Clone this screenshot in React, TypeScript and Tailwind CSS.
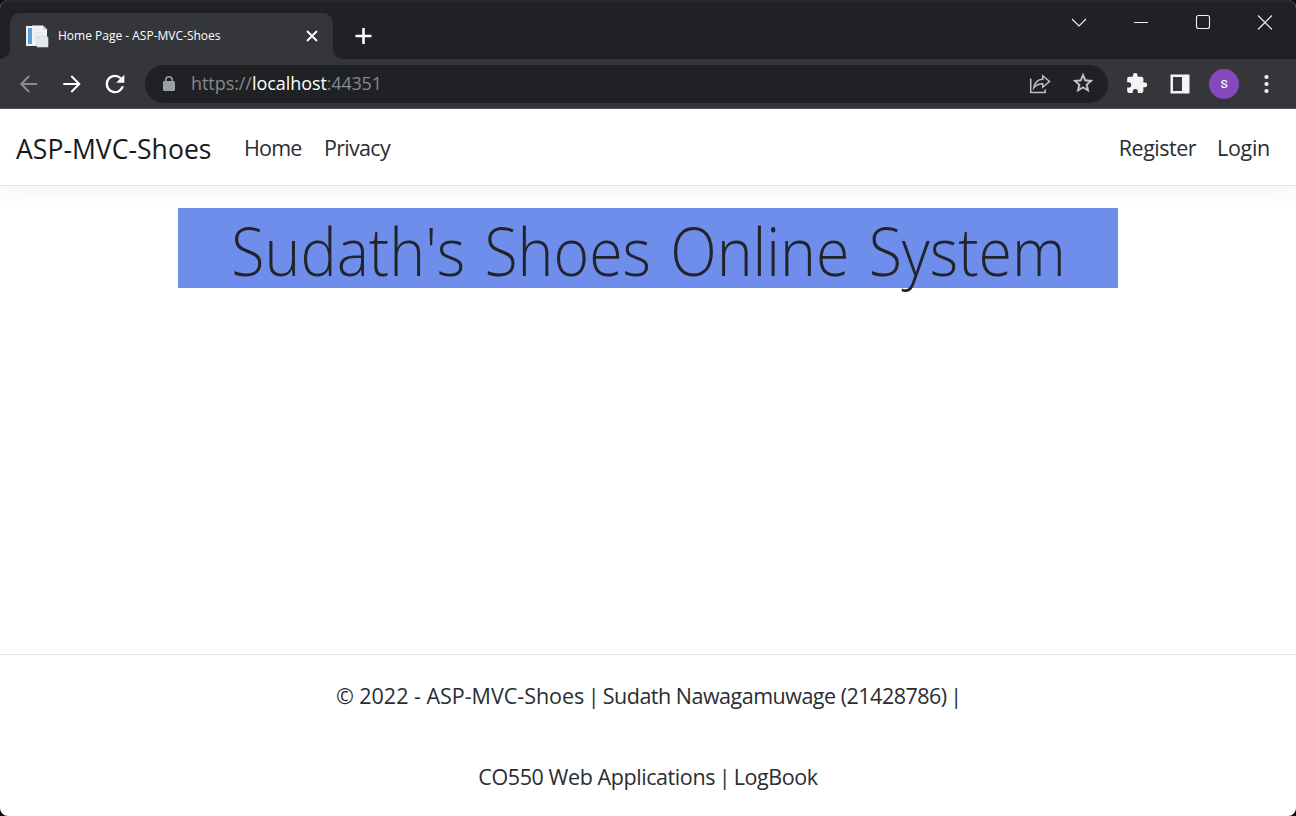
import type { ReactNode } from "react";

function TabStrip() {
  return (
    <div className="flex h-[59px] items-end border-t-2 border-[#2c2433] bg-[#202124]">
      <div className="flex h-[57px] items-end">
        <Flare className="w-[10px]" />
        <div className="flex h-[46px] w-[323px] items-center rounded-t-[10px] bg-[#35363a] pr-[15px] pl-[16px]">
          <Favicon />
          <span className="ml-[9px] flex-1 whitespace-nowrap text-[12px] text-white">Home Page - ASP-MVC-Shoes</span>
          <svg width="12" height="12" viewBox="0 0 12 12" stroke="#fff" strokeWidth="1.8" fill="none">
            <path d="M1 1l10 10M11 1L1 11" />
          </svg>
        </div>
        <Flare className="w-[10px] -scale-x-100" />
      </div>
      <svg className="mb-[15px] ml-[12px]" width="17" height="16" viewBox="0 0 17 16" stroke="#fff" strokeWidth="2.6">
        <path d="M8.500 0v16M.5 8h16" />
      </svg>
      <div className="ml-auto flex self-start pt-[12px] pr-[22px]">
        <svg width="212" height="18" viewBox="0 0 212 18" fill="none" stroke="#f1f1f1" strokeWidth="1.1">
          <path d="M10 5l7 7 7-7" />
          <path d="M72 8.5h14" strokeWidth="1" />
          <rect x="134.5" y="1.5" width="13" height="13" rx="2" />
          <path d="M196 1.5l14 14M210 1.5l-14 14" />
        </svg>
      </div>
    </div>
  );
}

function Flare({ className }: { className: string }) {
  return (
    <svg className={className} height="10" viewBox="0 0 10 10">
      <path d="M10 0v10H0A10 10 0 0 0 10 0z" fill="#35363a" />
    </svg>
  );
}

function Favicon() {
  return (
    <svg width="23" height="23" viewBox="0 0 23 23">
      <path d="M0 1h7v20H0z" fill="#e8eef3" />
      <path d="M2 3h4v16H2z" fill="#5f9fd2" />
      <path d="M6 .5h11l4 4V21H6z" fill="#f2f3f4" />
      <path d="M17 .5v4h4z" fill="#c9ced2" />
      <path d="M8 5h7M8 7.5h10M8 10h10M8 12.500h3M8 15h3" stroke="#dfe3e6" />
      <path d="M11 12h11v10H11z" fill="#eceeef" stroke="#c3c9cd" strokeWidth=".7" />
      <path d="M13 15h7M13 17.500h3M17 17.500h3M13 19.500h7" stroke="#d8dcdf" />
    </svg>
  );
}

function Toolbar() {
  return (
    <div className="flex h-[50px] items-center border-b border-[#55565a] bg-[#35363a] pl-[15px]">
      <svg width="27" height="26" viewBox="0 0 24 24" fill="#8a8b8e">
        <path d="M20 11.100H7.600l5.700-5.700L12 4l-8 8 8 8 1.300-1.300-5.700-5.800H20z" />
      </svg>
      <svg className="ml-[17px]" width="26" height="26" viewBox="0 0 24 24" fill="#fff">
        <path d="M4 11.100h12.400l-5.700-5.700L12 4l8 8-8 8-1.300-1.300 5.700-5.800H4z" />
      </svg>
      <svg className="ml-[16px]" width="28" height="28" viewBox="0 0 24 24" fill="#fff">
        <path d="M17.650 6.350A7.960 7.960 0 0 0 12 4a8 8 0 1 0 7.730 10h-2.080A6 6 0 1 1 12 6c1.660 0 3.140.69 4.220 1.780L13 11h7V4z" />
      </svg>
      <div className="ml-[16px] flex h-[38px] w-[963px] items-center rounded-full bg-[#202124] pr-[13px] pl-[17px]">
        <svg width="14" height="18" viewBox="0 0 14 18" fill="#9aa0a6">
          <path d="M3 6V5a4 4 0 0 1 8 0v1h.5c.8 0 1.500.7 1.500 1.500v7c0 .8-.7 1.500-1.500 1.500h-9C1.700 16 1 15.300 1 14.500v-7C1 6.700 1.700 6 2.500 6zm1.500 0h5V5a2.500 2.500 0 0 0-5 0z" />
        </svg>
        <span className="ml-[15px] flex-1 whitespace-nowrap text-[18px] tracking-[-0.06px] text-[#85888c]">
          https://<span className="text-white">localhost</span>
          <span className="tracking-[-0.2px]">:44351</span>
        </span>
        <svg width="22" height="20" viewBox="0 0 22 20" fill="none" stroke="#bfc0c3" strokeWidth="1.5">
          <path d="M1.700 4.500v14h14.500v-3" />
          <path d="M4.800 13.800C5.600 8.800 8.500 5.400 13.700 5.200V1.800l6.800 5.700-6.800 5.700V9.800c-3.600 0-6.400 1-8.900 4z" />
        </svg>
        <svg className="mb-[2px] ml-[20px]" width="24" height="24" viewBox="0 0 24 24" fill="#c8c9cc" stroke="#c8c9cc" strokeWidth=".3">
          <path d="M22 9.240l-7.190-.62L12 2 9.190 8.630 2 9.240l5.460 4.730L5.820 21 12 17.270 18.180 21l-1.630-7.030zM12 15.400l-3.760 2.270 1-4.280-3.320-2.880 4.380-.38L12 6.100l1.710 4.040 4.380.38-3.320 2.880 1 4.280z" />
        </svg>
      </div>
      <svg className="mb-[2px] ml-[19px]" width="20" height="20" viewBox="1.800 1 21 21" fill="#f4f4f5">
        <path d="M20.500 11H19V7c0-1.100-.9-2-2-2h-4V3.500a2.500 2.500 0 0 0-5 0V5H4c-1.100 0-1.990.9-1.990 2v3.800H3.500a2.700 2.700 0 0 1 0 5.400H2V20c0 1.100.9 2 2 2h3.800v-1.500a2.700 2.700 0 0 1 5.400 0V22H17c1.100 0 2-.9 2-2v-4h1.500a2.500 2.500 0 0 0 0-5z" />
      </svg>
      <svg className="ml-[23px]" width="20" height="20" viewBox="0 0 20 20" fill="#f4f4f5">
        <path fillRule="evenodd" d="M.5.500h19v19H.5zM3 3v14h9V3z" />
      </svg>
      <div className="ml-[19px] flex h-[30px] w-[30px] items-center justify-center rounded-full bg-[#8549bd] font-[Roboto,sans-serif] text-[15px] font-normal text-white">
        s
      </div>
      <svg className="ml-[25px]" width="5" height="20" viewBox="0 0 5 20" fill="#f4f4f5">
        <circle cx="2.500" cy="3" r="2.100" />
        <circle cx="2.500" cy="10" r="2.100" />
        <circle cx="2.500" cy="17" r="2.100" />
      </svg>
    </div>
  );
}

function NavLink({ children, className }: { children: ReactNode; className: string }) {
  return <a className={`whitespace-nowrap pt-[2px] text-[21.5px] leading-[34px] text-[#292e32] ${className}`}>{children}</a>;
}

function Navbar() {
  return (
    <nav className="flex h-[77px] shrink-0 items-center border-b border-[#dee2e6] bg-white pr-[26px] pl-[16px] shadow-[0_6px_22px_rgba(0,0,0,0.05)]">
      <a className="w-[228px] whitespace-nowrap pt-[3px] text-[26.500px] leading-[42px] tracking-[0.05px] text-[#16191c]">ASP-MVC-Shoes</a>
      <NavLink className="w-[80px] tracking-[-0.8px]">Home</NavLink>
      <NavLink className="tracking-[-0.7px]">Privacy</NavLink>
      <NavLink className="ml-auto tracking-[-0.5px]">Register</NavLink>
      <NavLink className="ml-[21px] tracking-[-0.3px]">Login</NavLink>
    </nav>
  );
}

function Divider() {
  return <span className="-mx-[1.5px]">|</span>;
}

export default function App() {
  return (
    <div className="h-[816px] w-[1296px] overflow-hidden bg-[#0b0413] font-['Open_Sans','Noto_Sans',sans-serif]">
      <div className="flex h-full flex-col overflow-hidden rounded-[8px] bg-white">
        <header className="shrink-0">
          <TabStrip />
          <Toolbar />
        </header>
        <Navbar />
        <main className="flex flex-1 justify-center pt-[22px]">
          <h1 className="h-[80px] w-[940px] whitespace-nowrap bg-[#6f8eeb] text-center text-[66px] leading-[84px] font-light text-[#212529]">
            <span className="inline-block scale-x-[0.922] [word-spacing:3.700px]">Sudath's Shoes Online System</span>
          </h1>
        </main>
        <footer className="flex h-[162px] shrink-0 flex-col items-center border-t border-[#dee2e6] pt-[24px] text-[21.500px] leading-[34px] text-[#292e32]">
          <p className="whitespace-nowrap tracking-[-0.5px]">
            <span className="tracking-[-0.02px]">© 2022 - ASP-MVC-Shoes</span> <Divider /> Sudath Nawagamuwage (21428786) <Divider />
          </p>
          <p className="mt-[47px] whitespace-nowrap tracking-[-0.42px]">
            CO550 Web Applications <Divider /> LogBook
          </p>
        </footer>
      </div>
    </div>
  );
}
